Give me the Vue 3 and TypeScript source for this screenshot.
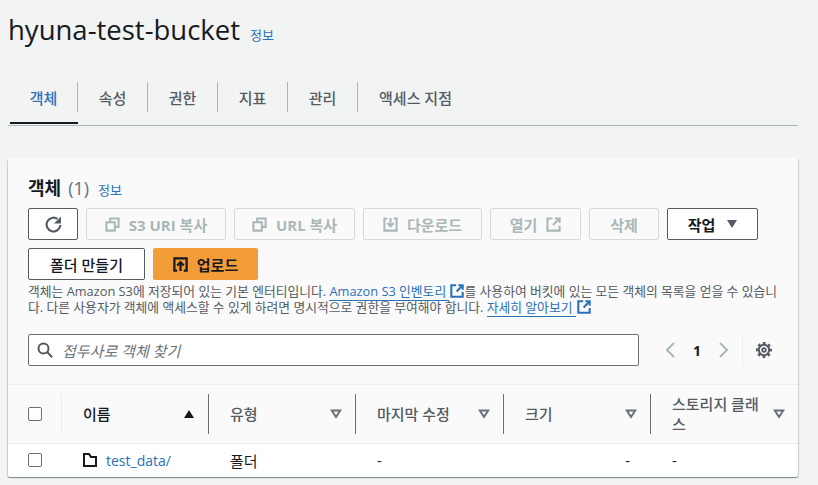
<script setup lang="ts">
interface Column {
  label: string
  sorted?: boolean
}

const tabs = ['객체', '속성', '권한', '지표', '관리', '액세스 지점']

const columns: Column[] = [
  { label: '이름', sorted: true },
  { label: '유형' },
  { label: '마지막 수정' },
  { label: '크기' },
  { label: '스토리지 클래스' }
]
</script>

<template>
  <div class="page">
    <header class="page-head">
      <h1>hyuna-test-bucket</h1>
      <a class="info">정보</a>
    </header>

    <nav class="tabs">
      <div v-for="(tab, i) in tabs" :key="tab" class="tab" :class="{ active: i === 0 }">
        <span class="tab-label">{{ tab }}</span>
      </div>
    </nav>

    <section class="card">
      <div class="card-head">
        <div class="card-title">
          <h2>객체</h2>
          <span class="count">(1)</span>
          <a class="info">정보</a>
        </div>

        <div class="actions">
          <button class="btn icon-only">
            <svg width="17" height="17" viewBox="0 0 16 16" fill="none" stroke="currentColor" stroke-width="2">
              <path d="M14.500 8.500A6.500 6.500 0 1 1 11.800 2.800" />
              <path d="M15 .5v6.500H8.500z" fill="currentColor" stroke="none" />
            </svg>
          </button>
          <button class="btn off w-uri">
            <svg width="15" height="15" viewBox="0 0 16 16" fill="none" stroke="currentColor" stroke-width="2.200">
              <path d="M1.500 5.500h9v9h-9z" />
              <path d="M5.500 5V1.500h9v9H11" />
            </svg>
            <span>S3 URI 복사</span>
          </button>
          <button class="btn off w-url">
            <svg width="15" height="15" viewBox="0 0 16 16" fill="none" stroke="currentColor" stroke-width="2.200">
              <path d="M1.500 5.500h9v9h-9z" />
              <path d="M5.500 5V1.500h9v9H11" />
            </svg>
            <span>URL 복사</span>
          </button>
          <button class="btn off w-down">
            <svg width="15" height="15" viewBox="0 0 16 16" fill="none" stroke="currentColor" stroke-width="2.200">
              <path d="M4.500 1.500H1.500v13h13v-13h-3" />
              <path d="M8 1v8" />
              <path d="M4.500 6.500 8 10l3.500-3.500" />
            </svg>
            <span>다운로드</span>
          </button>
          <button class="btn off w-open">
            <span>열기</span>
            <svg width="15" height="15" viewBox="0 0 16 16" fill="none" stroke="currentColor" stroke-width="2.200">
              <path d="M7 1.500H1.500v13h13V9" />
              <path d="M7.500 8.500 14 2" />
              <path d="M9.500 1.500h5v5" />
            </svg>
          </button>
          <button class="btn off w-del"><span>삭제</span></button>
          <button class="btn strong w-act">
            <span>작업</span>
            <i class="caret-down"></i>
          </button>
        </div>

        <div class="actions">
          <button class="btn strong w-folder"><span>폴더 만들기</span></button>
          <button class="btn primary">
            <svg width="15" height="15" viewBox="0 0 16 16" fill="none" stroke="currentColor" stroke-width="2.400">
              <path d="M4.500 14.500h-3v-13h13v13h-3" />
              <path d="M8 15V6" />
              <path d="M4.500 9 8 5.500 11.500 9" />
            </svg>
            <span>업로드</span>
          </button>
        </div>

        <p class="desc">
          객체는 Amazon S3에 저장되어 있는 기본 엔터티입니다.
          <a class="ext">Amazon S3 인벤토리 </a><svg class="ext-icon" width="14" height="14" viewBox="0 0 16 16" fill="none" stroke="currentColor" stroke-width="2.400"><path d="M7 1.500H1.500v13h13V9" /><path d="M7.500 8.500 14 2" /><path d="M9.500 1.500h5v5" /></svg>를 사용하여 버킷에 있는 모든 객체의 목록을 얻을 수 있습니다. 다른 사용자가 객체에 액세스할 수 있게 하려면 명시적으로 권한을 부여해야 합니다.
          <a class="ext">자세히 알아보기 </a><svg class="ext-icon" width="14" height="14" viewBox="0 0 16 16" fill="none" stroke="currentColor" stroke-width="2.400"><path d="M7 1.500H1.500v13h13V9" /><path d="M7.500 8.500 14 2" /><path d="M9.500 1.500h5v5" /></svg>
        </p>

        <div class="filter-row">
          <div class="search">
            <svg width="16" height="16" viewBox="0 0 16 16" fill="none" stroke="#545b64" stroke-width="2">
              <circle cx="6.500" cy="6.500" r="5" />
              <path d="m10.300 10.300 4.900 4.900" />
            </svg>
            <span class="placeholder">접두사로 객체 찾기</span>
          </div>
          <div class="pager">
            <svg width="12" height="16" viewBox="0 0 12 16" fill="none" stroke="#aab7b8" stroke-width="2"><path d="M10 1 3 8l7 7" /></svg>
            <span class="page-no">1</span>
            <svg width="12" height="16" viewBox="0 0 12 16" fill="none" stroke="#aab7b8" stroke-width="2"><path d="m2 1 7 7-7 7" /></svg>
          </div>
          <div class="prefs">
            <svg width="16" height="16" viewBox="0 0 16 16" fill="none" stroke="#545b64">
              <circle cx="8" cy="8" r="5.200" stroke-width="2" />
              <circle cx="8" cy="8" r="1.800" stroke-width="1.800" />
              <circle cx="8" cy="8" r="6.900" stroke-width="2.200" stroke-dasharray="2.800 2.620" stroke-dashoffset="1.400" />
            </svg>
          </div>
        </div>
      </div>

      <div class="table">
        <div class="thead">
          <div class="cell check-cell"><span class="checkbox"></span></div>
          <div v-for="col in columns" :key="col.label" class="th" :class="{ sorted: col.sorted }">
            <span class="th-label">{{ col.label }}</span>
            <i v-if="col.sorted" class="caret-up"></i>
            <svg v-else class="sort-icon" width="12" height="10" viewBox="0 0 12 10" fill="none" stroke="#687078" stroke-width="2"><path d="M1.800 1.500h8.400L6 8z" /></svg>
          </div>
        </div>
        <div class="tbody">
          <div class="cell check-cell"><span class="checkbox"></span></div>
          <div class="td name">
            <svg width="14" height="14" viewBox="0 0 14 14" fill="none" stroke="#16191f" stroke-width="2"><path d="M1 13V1h5l2 3h5v9z" /></svg>
            <a>test_data/</a>
          </div>
          <div class="td">폴더</div>
          <div class="td">-</div>
          <div class="td dash-right">-</div>
          <div class="td">-</div>
        </div>
      </div>
    </section>
  </div>
</template>

<style scoped>
.page {
  width: 818px;
  height: 485px;
  overflow: hidden;
  box-sizing: border-box;
  padding: 12px 20px 0 8px;
  background: #f2f3f3;
  color: #16191f;
  font-family: "Open Sans", "Noto Sans CJK KR", sans-serif;
}

.page-head {
  display: flex;
  align-items: baseline;
  gap: 10px;
  height: 36px;
}

h1 {
  margin: 0;
  font-size: 27.500px;
  line-height: 36px;
  font-weight: 400;
}

.info {
  color: #2a71b8;
  font-size: 13px;
}

.tabs {
  display: flex;
  align-items: center;
  height: 77px;
  padding-left: 2px;
  border-bottom: 1px solid #aab7b8;
}

.tab {
  height: 30px;
  margin-top: 34px;
  align-self: flex-start;
  display: flex;
  align-items: center;
  justify-content: center;
  box-sizing: border-box;
  width: 70px;
  border-right: 1px solid #aab7b8;
  position: relative;
  color: #545b64;
  font-size: 15px;
  font-weight: 500;
}

.tab:first-child {
  width: 68px;
}

.tab:last-child {
  width: 115px;
  border-right: 0;
}

.tab.active {
  color: #2a71b8;
}

.tab.active::after {
  content: "";
  position: absolute;
  left: 0;
  right: -1px;
  bottom: -12px;
  height: 2px;
  background: #16191f;
}

.card {
  margin-top: 32px;
  height: 319px;
  width: 790px;
  box-sizing: border-box;
  background: #fff;
  border-radius: 2px;
  box-shadow: 0 1px 1px 0 rgba(0, 28, 36, 0.3), 1px 1px 1px 0 rgba(0, 28, 36, 0.15), -1px 1px 1px 0 rgba(0, 28, 36, 0.15);
  overflow: hidden;
}

.card-head {
  background: #fafafa;
  padding: 19px 20px 0;
  height: 227px;
  box-sizing: border-box;
  border-bottom: 1px solid #eaeded;
}

.card-title {
  display: flex;
  align-items: baseline;
  gap: 7px;
  height: 23px;
}

h2 {
  margin: 0;
  font-size: 18px;
  line-height: 23px;
  font-weight: 700;
}

.count {
  color: #687078;
  font-size: 18px;
  line-height: 23px;
}

.card-title .info {
  margin-left: 2px;
}

.actions {
  display: flex;
  gap: 8px;
  margin-top: 8px;
}

.btn {
  height: 32px;
  box-sizing: border-box;
  border: 1px solid #545b64;
  border-radius: 2px;
  background: #fff;
  padding: 0;
  display: flex;
  align-items: center;
  justify-content: center;
  gap: 9px;
  font-family: inherit;
  font-size: 15px;
  font-weight: 700;
  color: #545b64;
}

.icon-only {
  width: 50px;
}

.off {
  background: #fafafa;
  border-color: #d5dbdb;
  color: #aab7b8;
}

.w-uri { width: 140px; }
.w-url { width: 121px; }
.w-down { width: 119px; }
.w-open { width: 91px; }
.w-del { width: 70px; }
.w-act { width: 91px; gap: 12px; }
.w-folder { width: 117px; font-weight: 500; color: #16191f; }

.strong {
  color: #16191f;
}

.primary {
  width: 105px;
  background: #f29d38;
  border-color: #f29d38;
  color: #16191f;
  gap: 9px;
}

.caret-down {
  width: 0;
  height: 0;
  border-left: 5.500px solid transparent;
  border-right: 5.500px solid transparent;
  border-top: 8px solid #545b64;
}

.desc {
  margin: 3px 0 0;
  font-size: 12.800px;
  line-height: 16px;
  color: #545b64;
  width: 752px;
  word-break: break-all;
}

.ext {
  color: #2a71b8;
  border-bottom: 1px solid #2a71b8;
}

.ext-icon {
  color: #2a71b8;
  vertical-align: -2px;
  margin-left: 1px;
}

.filter-row {
  display: flex;
  align-items: center;
  margin-top: 19px;
  height: 32px;
}

.search {
  width: 611px;
  height: 32px;
  box-sizing: border-box;
  background: #fff;
  border: 1px solid #687078;
  border-radius: 2px;
  display: flex;
  align-items: center;
  gap: 9px;
  padding-left: 8px;
}

.placeholder {
  color: #687078;
  font-size: 15px;
  font-style: italic;
}

.pager {
  display: flex;
  align-items: center;
  margin-left: 25px;
  gap: 16px;
  padding-right: 12px;
  height: 32px;
  border-right: 1px solid #eaeded;
}

.page-no {
  font-size: 14px;
  font-weight: 700;
  width: 10px;
  text-align: center;
}

.prefs {
  display: flex;
  align-items: center;
  margin-left: 13px;
}

.thead,
.tbody {
  display: grid;
  grid-template-columns: 54px 147px 147px 148px 147px 1fr;
}

.thead {
  height: 59px;
  background: #fafafa;
  border-bottom: 1px solid #eaeded;
  box-sizing: border-box;
  align-items: center;
}

.tbody {
  height: 32px;
  background: #fff;
  align-items: center;
}

.cell {
  height: 100%;
  display: flex;
  align-items: center;
  justify-content: flex-end;
}

.check-cell {
  justify-content: flex-start;
  padding-left: 20px;
}

.thead .check-cell {
  position: relative;
}

.thead .check-cell::after {
  content: "";
  position: absolute;
  left: 53px;
  top: 9px;
  height: 40px;
  border-left: 1px solid #eaeded;
}

.checkbox {
  width: 12px;
  height: 12px;
  border: 1px solid #687078;
  border-radius: 2px;
  background: #fff;
  box-sizing: content-box;
}

.th {
  height: 40px;
  display: flex;
  align-items: center;
  justify-content: space-between;
  box-sizing: border-box;
  padding: 0 13px 0 21px;
  border-right: 1px solid #687078;
  font-size: 15px;
  font-weight: 500;
  color: #545b64;
}

.th:last-child {
  border-right: 0;
}

.th.sorted {
  color: #16191f;
  padding-right: 14px;
}

.th-label {
  width: 92px;
  line-height: 20px;
}

.caret-up {
  width: 0;
  height: 0;
  border-left: 5.500px solid transparent;
  border-right: 5.500px solid transparent;
  border-bottom: 8px solid #16191f;
}

.td {
  padding-left: 21px;
  font-size: 15px;
  color: #16191f;
}

.dash-right {
  text-align: right;
  padding-right: 21px;
}

.name {
  display: flex;
  align-items: center;
  gap: 9px;
}

.name a {
  color: #2a71b8;
  font-size: 14px;
}
</style>

<style>
html,
body {
  margin: 0;
  background: #f2f3f3;
}
</style>
